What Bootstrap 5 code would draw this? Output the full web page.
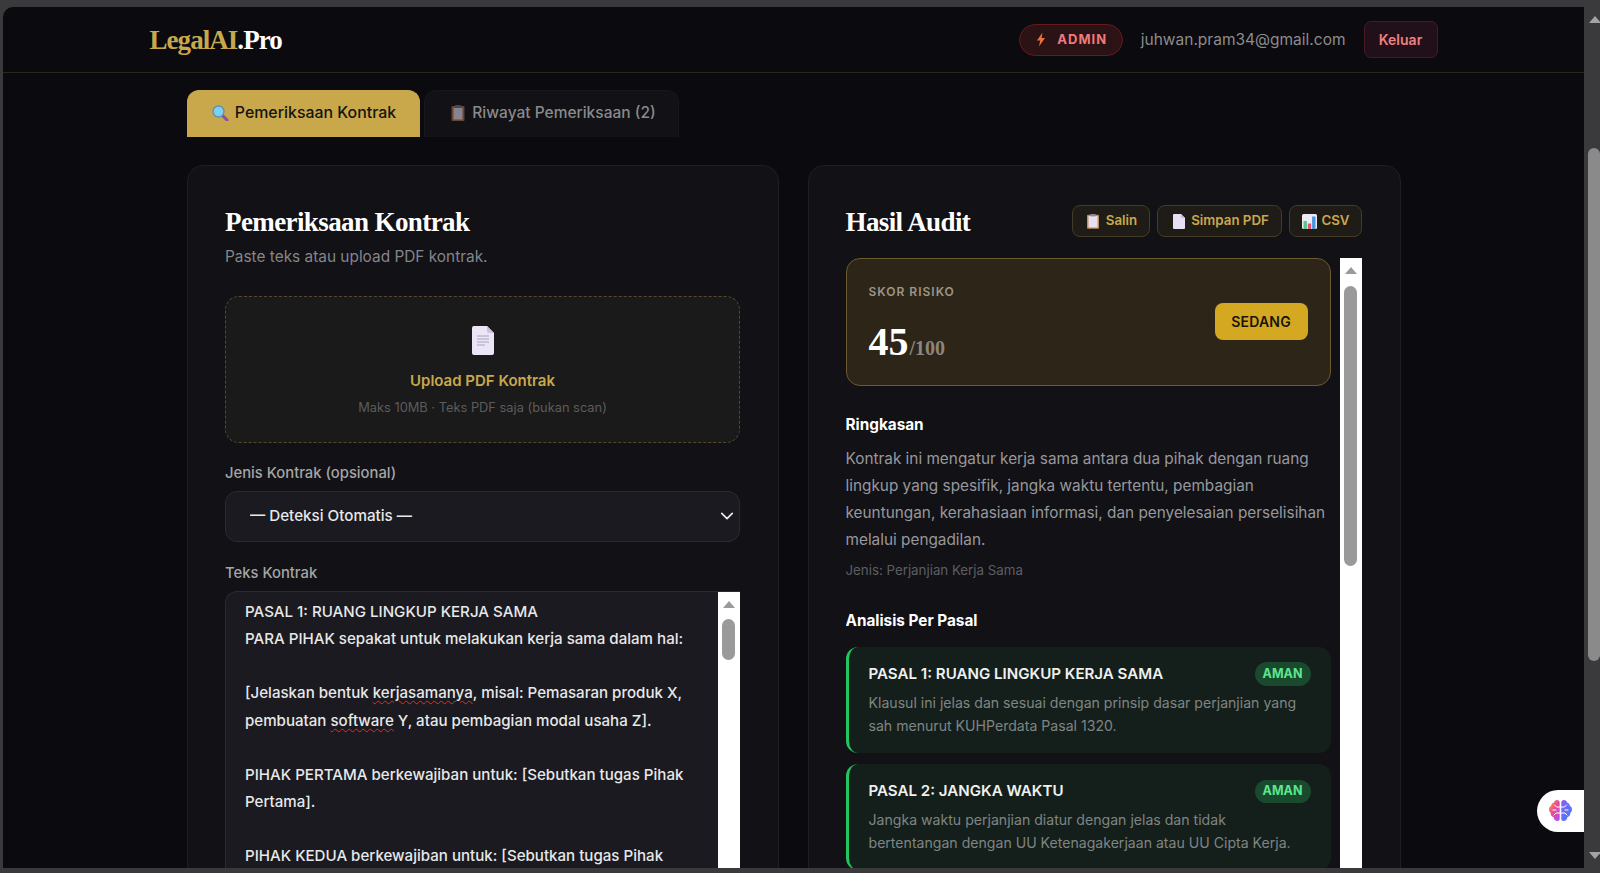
<!DOCTYPE html>
<html lang="id">
<head>
  <meta charset="utf-8">
  <title>LegalAI.Pro - Pemeriksaan Kontrak</title>
  <link rel="stylesheet" href="https://cdn.jsdelivr.net/npm/bootstrap@5.3.0/dist/css/bootstrap.min.css">
  <style>
    html, body { height: 100%; overflow: hidden; }
    body { background: #3a3a3c; font-family: "Inter", "Liberation Sans", sans-serif; color: #e8e8e8; }

    .shot { height: 100vh; }
    .chrome-top { height: 7px; background: #3a3a3c; flex: none; }
    .chrome-bottom { height: 5px; background: #3a3a3c; flex: none; }
    .chrome-left { width: 3px; background: #3a3a3c; flex: none; }
    .shot-mid { flex: 1 1 0; min-height: 0; }
    .view { flex: 1 1 0; min-width: 0; overflow: hidden; background: #0a0a0f; border-top-left-radius: 10px; position: relative; }

    .page-bar { width: 16px; flex: none; background: #3a3a3c; position: relative; }
    .page-bar .arrow-up { position: absolute; top: 9px; left: 5px; border-bottom-color: #a3a3a3; }
    .page-bar .arrow-down { position: absolute; bottom: 9px; left: 5px; }
    .page-thumb { position: absolute; top: 141px; left: 4px; right: 0; height: 513px; background: #8a8a8a; border-radius: 6px; }
    .arrow-up { width: 0; height: 0; border-left: 6px solid transparent; border-right: 6px solid transparent; border-bottom: 7px solid #9a9a9a; }
    .arrow-down { width: 0; height: 0; border-left: 6px solid transparent; border-right: 6px solid transparent; border-top: 7px solid #a3a3a3; }

    .top-head { height: 65.5px; border-bottom: 1px solid #2b2719; flex: none; }
    .head-inner { width: 1288px; margin: 0 auto; height: 100%; }
    .brand { font-family: "Liberation Serif", serif; font-weight: 700; font-size: 27px; letter-spacing: -.95px; color: #fff; position: relative; top: 1px; }
    .brand span { color: #c9a84c; }
    .admin-pill { height: 32px; width: 104px; margin-top: 1px; padding-left: 2px; border-radius: 16px; background: #2a1215; border: 1px solid #66191f; color: #f07a7a; font-size: 13px; font-weight: 700; letter-spacing: 1px; gap: 11px; }
    .user-mail { color: #8c8c8c; font-size: 15.5px; margin: 0 18px; }
    .logout-btn { height: 37px; width: 74px; padding: 0; background: #21101a; border: 1px solid #4a1a20; border-radius: 7px; color: #f08080; font-size: 14px; font-weight: 600; }

    .main-wrap { width: 1214px; margin: 0 auto; }
    .tab-row { margin-top: 17px; gap: 4px; }
    .tab-btn { height: 47.5px; border: 1px solid #17171c; border-bottom: 0; border-radius: 12px 12px 0 0; background: #111116; color: #8a8a8a; font-size: 15.5px; font-weight: 500; gap: 7px; padding: 0 0 2px; }
    .tab-on { width: 233px; padding-left: 2px; gap: 6px; background: #c9a84c; border-color: #c9a84c; color: #15140f; font-size: 15.9px; }
    .tab-off { width: 255px; padding-left: 5px; }
    .tab-off svg { opacity: .55; }

    .audit-grid { display: grid; grid-template-columns: 592px 593px; gap: 29px; margin-top: 28px; }
    .sheet { background: #111116; border: 1px solid #1e1e24; border-radius: 16px; padding: 38px 37.5px 40px; color: #e8e8e8; }
    .sheet-right { padding-left: 37px; padding-right: 38px; }
    .sheet-title { font-family: "Liberation Serif", serif; font-weight: 700; font-size: 27px; letter-spacing: -.6px; line-height: 36px; color: #fff; margin: 0; }
    .sheet-sub { color: #85858a; font-size: 15.4px; line-height: 22px; margin: 6px 0 28px; }

    .drop-zone { height: 147px; background: #1a1a1a; border: 1px dashed #54492a; border-radius: 14px; padding-top: 29px; }
    .drop-zone svg { display: block; margin: 0 auto; }
    .drop-title { color: #c9a84c; font-size: 15px; font-weight: 600; line-height: 22px; margin-top: 15px; }
    .drop-note { color: #5c5c5c; font-size: 12.85px; line-height: 20px; margin-top: 6px; }

    .field-label { color: #a5a5a5; font-size: 14.8px; font-weight: 500; line-height: 20px; margin: 20px 0 8px; display: block; }
    .label-text { margin: 21px 0 9px; }
    .kind-select { height: 50.7px; padding: 1px 30px 0 24px; background-color: #1a1a20; border: 1px solid #2a2a30; border-radius: 12px; color: #e8e8e8; font-size: 15.2px; font-weight: 500; font-family: inherit;
      background-image: url("data:image/svg+xml,%3csvg xmlns='http://www.w3.org/2000/svg' viewBox='0 0 16 16'%3e%3cpath fill='none' stroke='%23e8e8e8' stroke-linecap='round' stroke-linejoin='round' stroke-width='2' d='m2 5 6 6 6-6'/%3e%3c/svg%3e"); background-position: right 5px center; background-size: 14px; }
    .text-box { height: 320px; background: #1a1a20; border: 1px solid #2a2a30; border-right: 0; border-radius: 12px 0 0 0; margin-top: -1px; overflow: hidden; }
    .text-lines { flex: 1 1 0; min-width: 0; padding: 6.5px 0 0 19px; font-size: 15.1px; font-weight: 500; line-height: 27.1px; color: #e8e8e8; white-space: nowrap; overflow: hidden; }
    .line-gap { height: 27.1px; }
    .typo { text-decoration: underline wavy #d9342b 1px; text-underline-offset: 2px; }

    .scroll-strip { width: 22px; flex: none; background: #fff; padding-top: 9px; }
    .strip-thumb { width: 13px; background: #9a9a9a; border-radius: 7px; margin: 11.5px 0 0 4px; }

    .act-row { gap: 7px; margin-top: -2px; }
    .act-btn { height: 32px; padding: 0 12px 0 14.5px; background: #1f1c17; border: 1px solid #443c28; border-radius: 8px; color: #c9a84c; font-size: 13.3px; font-weight: 600; gap: 6.5px; }
    .act-csv { padding: 0 11px 0 12px; gap: 4.5px; }
    .result-wrap { margin-top: 18px; height: 640px; overflow: hidden; }
    .result-body { flex: 1 1 0; min-width: 0; margin-right: 9px; }

    .score-box { height: 128px; background: #2e2519; border: 1px solid #6b5a30; border-radius: 14px; padding: 24px 22px 0; }
    .score-label { color: #9c968a; font-size: 12px; font-weight: 600; letter-spacing: 1px; line-height: 18px; }
    .score-num { font-family: "Liberation Serif", serif; font-weight: 700; font-size: 40px; line-height: 48px; color: #fff; margin-top: 17px; }
    .score-num small { font-size: 20px; color: #8d867a; margin-left: 1px; }
    .risk-pill { width: 93px; height: 37px; margin-top: 20px; background: #d4a820; border-radius: 8px; color: #17150e; font-size: 14px; font-weight: 600; letter-spacing: .2px; }

    .block-head { color: #fff; font-size: 15.3px; font-weight: 700; line-height: 22px; margin: 28px 0 8.5px; }
    .block-text { color: #98989c; font-size: 15.35px; line-height: 27px; margin: 0 -6px 0 0; }
    .block-meta { color: #5e5e62; font-size: 13.3px; line-height: 20px; margin-top: 7.5px; }
    .head-analysis { margin: 30px 0 15px; }

    .clause-box { background: #141f1b; border-left: 3px solid #22c55e; border-radius: 12px; padding: 15px 20px 15.2px 20px; margin-bottom: 11.8px; }
    .clause-title { color: #f0f0f0; font-size: 15.1px; font-weight: 600; line-height: 24px; margin: 0; }
    .safe-tag { width: 56px; height: 23.5px; border-radius: 12px; background: #1a4a2e; color: #5ce68f; font-size: 12.5px; font-weight: 700; }
    .clause-text { color: #7f8583; font-size: 14.1px; line-height: 23.5px; margin: 4.5px 0 0; }

    .brain-tab { position: absolute; right: 0; top: 783px; width: 47px; height: 42px; background: #fff; border-radius: 21px 0 0 21px; }
  </style>
</head>
<body>
  <div class="shot d-flex flex-column">
    <div class="chrome-top"></div>
    <div class="shot-mid d-flex">
      <div class="chrome-left"></div>
      <div class="view d-flex flex-column">
        <header class="top-head">
          <div class="head-inner d-flex align-items-center justify-content-between">
            <div class="brand"><span>LegalAI</span>.Pro</div>
            <div class="d-flex align-items-center">
              <div class="admin-pill d-flex align-items-center justify-content-center">
                <svg width="10" height="15" viewBox="0 0 10 14"><path d="M6.500 0 1 8h3.200L3 14l6-8.500H5.600z" fill="#f0703a"/></svg>
                ADMIN
              </div>
              <div class="user-mail">juhwan.pram34@gmail.com</div>
              <button class="btn logout-btn">Keluar</button>
            </div>
          </div>
        </header>

        <div class="main-wrap">
          <div class="tab-row d-flex">
            <button class="btn tab-btn tab-on d-flex align-items-center justify-content-center">
              <svg width="17" height="16" viewBox="0 0 17 16"><path d="M10 10l5 5" stroke="#8a4fa0" stroke-width="3" stroke-linecap="round"/><circle cx="6.500" cy="6.500" r="5.500" fill="#7fd0ee" stroke="#5a93b8" stroke-width="1.400"/></svg>
              Pemeriksaan Kontrak
            </button>
            <button class="btn tab-btn tab-off d-flex align-items-center justify-content-center">
              <svg width="14" height="16" viewBox="0 0 14 16"><rect x=".5" y="1" width="13" height="15" rx="1" fill="#b5714a"/><rect x="2.500" y="3" width="9" height="11.500" fill="#e8e2f2"/><rect x="4" y="0" width="6" height="3" rx="1" fill="#777"/></svg>
              Riwayat Pemeriksaan (2)
            </button>
          </div>

          <div class="audit-grid">
            <section class="sheet">
              <h2 class="sheet-title">Pemeriksaan Kontrak</h2>
              <p class="sheet-sub">Paste teks atau upload PDF kontrak.</p>

              <div class="drop-zone text-center">
                <svg width="22" height="29" viewBox="0 0 22 29"><path d="M2 0h13l7 7v20a2 2 0 0 1-2 2H2a2 2 0 0 1-2-2V2a2 2 0 0 1 2-2z" fill="#ebe5f7"/><path d="M15 0l7 7h-5a2 2 0 0 1-2-2z" fill="#c9c4da"/><path d="M5 10h12M5 13h12M5 16h12M5 19h8" stroke="#a8a4b8" stroke-width="1"/></svg>
                <div class="drop-title">Upload PDF Kontrak</div>
                <div class="drop-note">Maks 10MB · Teks PDF saja (bukan scan)</div>
              </div>

              <label class="field-label" for="jenisKontrak">Jenis Kontrak (opsional)</label>
              <select class="form-select kind-select" id="jenisKontrak">
                <option>— Deteksi Otomatis —</option>
                <option>Perjanjian Kerja Sama</option>
              </select>

              <label class="field-label label-text">Teks Kontrak</label>
              <div class="text-box d-flex">
                <div class="text-lines">
                  <div>PASAL 1: RUANG LINGKUP KERJA SAMA</div>
                  <div>PARA PIHAK sepakat untuk melakukan kerja sama dalam hal:</div>
                  <div class="line-gap"></div>
                  <div>[Jelaskan bentuk <span class="typo">kerjasamanya</span>, misal: Pemasaran produk X,</div>
                  <div>pembuatan <span class="typo">software</span> Y, atau pembagian modal usaha Z].</div>
                  <div class="line-gap"></div>
                  <div>PIHAK PERTAMA berkewajiban untuk: [Sebutkan tugas Pihak</div>
                  <div>Pertama].</div>
                  <div class="line-gap"></div>
                  <div>PIHAK KEDUA berkewajiban untuk: [Sebutkan tugas Pihak</div>
                </div>
                <div class="scroll-strip">
                  <div class="arrow-up mx-auto"></div>
                  <div class="strip-thumb" style="height: 41px"></div>
                </div>
              </div>
            </section>

            <section class="sheet sheet-right">
              <div class="d-flex justify-content-between align-items-center">
                <h2 class="sheet-title">Hasil Audit</h2>
                <div class="act-row d-flex">
                  <button class="btn act-btn d-flex align-items-center">
                    <svg width="12" height="15" viewBox="0 0 12 15"><rect y=".8" width="12" height="14" rx="1" fill="#c08a62"/><rect x="1.500" y="2" width="9" height="11.500" fill="#e6e0f0"/><rect x="3.500" width="5" height="2.400" fill="#8a8a8a"/></svg>
                    Salin
                  </button>
                  <button class="btn act-btn d-flex align-items-center">
                    <svg width="12" height="15" viewBox="0 0 12 15"><path d="M1 0h7l4 4v10a1 1 0 0 1-1 1H1a1 1 0 0 1-1-1V1a1 1 0 0 1 1-1z" fill="#e6e0f5"/><path d="M8 0l4 4H8z" fill="#c2bed4"/></svg>
                    Simpan PDF
                  </button>
                  <button class="btn act-btn act-csv d-flex align-items-center">
                    <svg width="15" height="15" viewBox="0 0 15 15"><rect width="15" height="15" rx="1.500" fill="#eeeaf6"/><rect x="1.500" y="7" width="3.400" height="8" fill="#54c985"/><rect x="5.800" y="9.500" width="3.400" height="5.500" fill="#e5527a"/><rect x="10.100" y="2.500" width="3.400" height="12.500" fill="#4a96dc"/></svg>
                    CSV
                  </button>
                </div>
              </div>

              <div class="result-wrap d-flex">
                <div class="result-body">
                  <div class="score-box d-flex justify-content-between align-items-start">
                    <div>
                      <div class="score-label">SKOR RISIKO</div>
                      <div class="score-num">45<small>/100</small></div>
                    </div>
                    <div class="risk-pill d-flex align-items-center justify-content-center">SEDANG</div>
                  </div>

                  <div class="block-head">Ringkasan</div>
                  <p class="block-text">Kontrak ini mengatur kerja sama antara dua pihak dengan ruang lingkup yang spesifik, jangka waktu tertentu, pembagian keuntungan, kerahasiaan informasi, dan penyelesaian perselisihan melalui pengadilan.</p>
                  <div class="block-meta">Jenis: Perjanjian Kerja Sama</div>

                  <div class="block-head head-analysis">Analisis Per Pasal</div>

                  <div class="clause-box">
                    <div class="d-flex justify-content-between align-items-center">
                      <h3 class="clause-title">PASAL 1: RUANG LINGKUP KERJA SAMA</h3>
                      <span class="safe-tag d-flex align-items-center justify-content-center">AMAN</span>
                    </div>
                    <p class="clause-text">Klausul ini jelas dan sesuai dengan prinsip dasar perjanjian yang sah menurut KUHPerdata Pasal 1320.</p>
                  </div>
                  <div class="clause-box">
                    <div class="d-flex justify-content-between align-items-center">
                      <h3 class="clause-title">PASAL 2: JANGKA WAKTU</h3>
                      <span class="safe-tag d-flex align-items-center justify-content-center">AMAN</span>
                    </div>
                    <p class="clause-text">Jangka waktu perjanjian diatur dengan jelas dan tidak bertentangan dengan UU Ketenagakerjaan atau UU Cipta Kerja.</p>
                  </div>
                </div>
                <div class="scroll-strip">
                  <div class="arrow-up mx-auto"></div>
                  <div class="strip-thumb" style="height: 280px"></div>
                </div>
              </div>
            </section>
          </div>
        </div>

        <div class="brain-tab d-flex align-items-center justify-content-center">
          <svg width="23" height="22" viewBox="0 0 23 22">
            <defs>
              <linearGradient id="brainL" x1="0" y1="0" x2="1" y2="1"><stop offset="0" stop-color="#f59e3c"/><stop offset=".5" stop-color="#ec4899"/><stop offset="1" stop-color="#a855f7"/></linearGradient>
              <linearGradient id="brainR" x1="0" y1="0" x2="1" y2="1"><stop offset="0" stop-color="#8b5cf6"/><stop offset="1" stop-color="#3b82f6"/></linearGradient>
            </defs>
            <path d="M10.700 2.500C10.700 1 9.500 0 8 0 6.400 0 5.200 1 5 2.400 3.300 2.700 2 4 2.200 5.800.7 6.600 0 8 0 9.600c0 1.400.6 2.600 1.700 3.300-.3 2 .8 3.600 2.800 4 .3 2.400 2 4.100 4 4.100 1.300 0 2.200-.8 2.200-2.200z" fill="url(#brainL)"/>
            <path d="M12.300 2.500C12.300 1 13.500 0 15 0c1.600 0 2.800 1 3 2.400 1.700.3 3 1.600 2.800 3.400 1.500.8 2.200 2.200 2.200 3.800 0 1.400-.6 2.600-1.700 3.300.3 2-.8 3.600-2.800 4-.3 2.400-2 4.100-4 4.100-1.300 0-2.200-.8-2.200-2.200z" fill="url(#brainR)"/>
            <path d="M10.700 7H7.500L5.500 5M10.700 13H7l-2 2M4 10h3M12.300 7h3.200l2-2M12.300 13H16l2 2M19 10h-3" fill="none" stroke="#fff" stroke-width="1" stroke-linecap="round"/>
          </svg>
        </div>
      </div>
      <div class="page-bar">
        <div class="arrow-up"></div>
        <div class="page-thumb"></div>
        <div class="arrow-down"></div>
      </div>
    </div>
    <div class="chrome-bottom"></div>
  </div>
  <script src="https://cdn.jsdelivr.net/npm/bootstrap@5.3.0/dist/js/bootstrap.bundle.min.js"></script>
</body>
</html>
